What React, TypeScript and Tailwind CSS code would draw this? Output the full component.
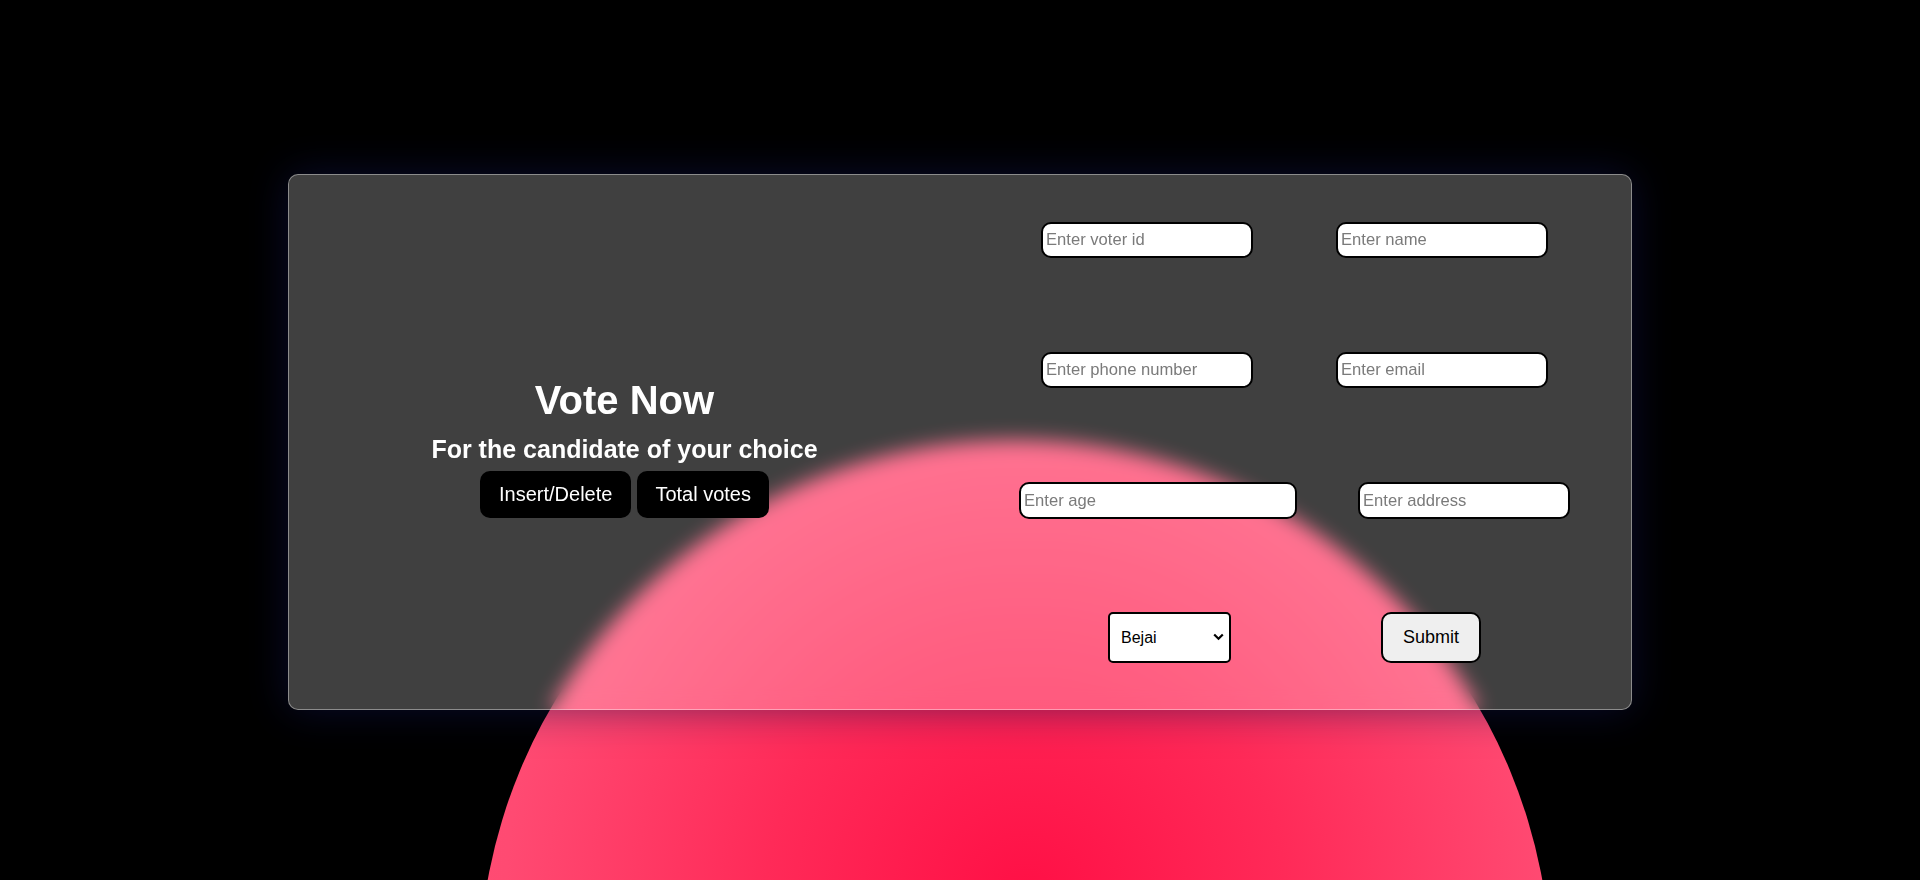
import React, { useState } from 'react';

const cities = ['Bejai', 'Kadri', 'Hampankatta', 'Surathkal'];

export default function VotingForm() {
  const [city, setCity] = useState('Bejai');

  const field =
    'h-[36px] rounded-[10px] border-2 border-black bg-white pl-[3px] text-[16.6px] text-black outline-none placeholder:text-[#7a7a7a]';

  return (
    <div className="relative flex h-[880px] w-full items-center justify-center overflow-hidden bg-black pt-[4px] font-['Liberation_Sans',Arial,sans-serif]">
      {/* background blob */}
      <div className="absolute left-[479px] top-[440px] h-[1072px] w-[1072px] rounded-full bg-[radial-gradient(circle_at_51%_43%,#ff0f45_0px,#ff2a58_260px,#ff4a72_520px,#ff5279_760px)]" />

      <div className="relative flex h-[536px] w-[1344px] rounded-[10px] border border-white/40 bg-white/25 shadow-[0_0_40px_rgba(16,20,80,0.55)] backdrop-blur-[10px]">
        <div className="flex w-[671px] flex-col items-center justify-center pt-[11px] text-white">
          <h1 className="mb-[12px] text-[40px] font-bold leading-[1.15]">Vote Now</h1>
          <h2 className="mb-[7px] text-[25px] font-bold leading-[1.15]">For the candidate of your choice</h2>
          <div className="flex gap-[6px]">
            <button className="rounded-[10px] bg-black px-[19px] py-[12px] text-[20px] leading-[23px] text-white">
              Insert/Delete
            </button>
            <button className="rounded-[10px] bg-black px-[18px] py-[12px] text-[20px] leading-[23px] text-white">
              Total votes
            </button>
          </div>
        </div>

        <form className="flex flex-1 flex-col pl-[59px] pt-[47px]" onSubmit={e => e.preventDefault()}>
          <div className="grid h-[130px] grid-cols-[317px_1fr] items-start">
            <input className={`${field} ml-[22px] w-[212px]`} placeholder="Enter voter id" />
            <input className={`${field} w-[212px]`} placeholder="Enter name" />
          </div>
          <div className="grid h-[130px] grid-cols-[317px_1fr] items-start">
            <input className={`${field} ml-[22px] w-[212px]`} placeholder="Enter phone number" />
            <input className={`${field} w-[212px]`} placeholder="Enter email" />
          </div>
          <div className="grid h-[130px] grid-cols-[317px_1fr] items-start">
            <input className={`${field} h-[37px] w-[278px]`} placeholder="Enter age" />
            <input className={`${field} ml-[22px] h-[37px] w-[212px]`} placeholder="Enter address" />
          </div>
          <div className="grid grid-cols-[317px_1fr] items-start">
            <div className="relative ml-[89px] h-[51px] w-[123px]">
              <select
                value={city}
                onChange={e => setCity(e.target.value)}
                className="h-full w-full appearance-none rounded-[5px] border-2 border-black bg-white pl-[11px] text-[16px] text-black outline-none"
              >
                {cities.map(c => (
                  <option key={c} value={c}>{c}</option>
                ))}
              </select>
              <svg
                className="pointer-events-none absolute right-[7px] top-[21px]"
                width="11"
                height="8"
                viewBox="0 0 11 8"
                fill="none"
              >
                <path d="M1.2 1.5 L5.5 5.8 L9.8 1.5" stroke="black" strokeWidth="2.2" />
              </svg>
            </div>
            <button
              type="submit"
              className="ml-[45px] h-[51px] w-[100px] rounded-[10px] border-2 border-black bg-[#efefef] text-[18px] text-black"
            >
              Submit
            </button>
          </div>
        </form>
      </div>
    </div>
  );
}
